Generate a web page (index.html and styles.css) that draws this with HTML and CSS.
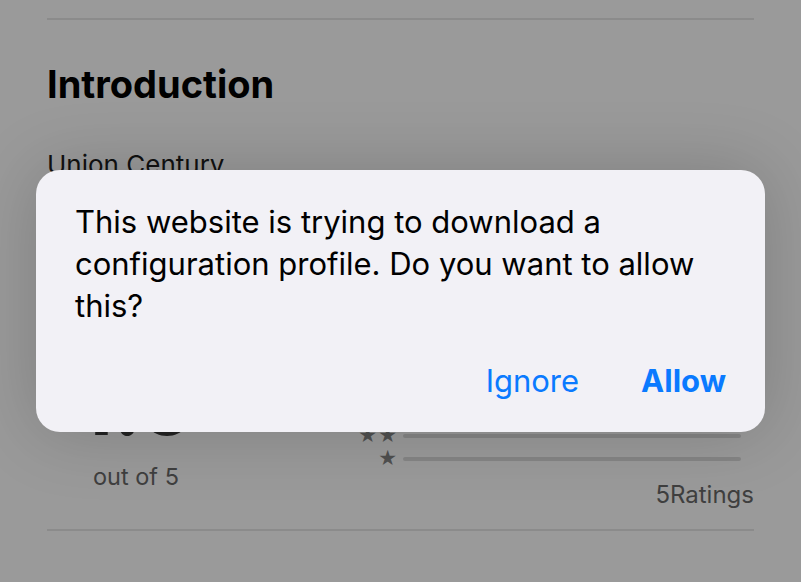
FILE: index.html
```html
<!DOCTYPE html>
<html lang="en">
<head>
<meta charset="utf-8">
<title>Configuration profile</title>
<link rel="stylesheet" href="styles.css">
</head>
<body>
<main class="page">
  <div class="divider"></div>
  <h1 class="title">Introduction</h1>
  <p class="lead">Union Century</p>
  <section class="ratings">
    <div class="score">
      <div class="score-num">1.0</div>
      <div class="score-sub">out of 5</div>
    </div>
    <div class="bars">
      <div class="bar-row"><span class="stars">★★★★★</span><span class="bar"></span></div>
      <div class="bar-row"><span class="stars">★★★★</span><span class="bar"></span></div>
      <div class="bar-row"><span class="stars">★★★</span><span class="bar"></span></div>
      <div class="bar-row"><span class="stars">★★</span><span class="bar"></span></div>
      <div class="bar-row"><span class="stars">★</span><span class="bar"></span></div>
      <div class="count">5Ratings</div>
    </div>
  </section>
  <div class="divider"></div>
</main>
<div class="overlay">
  <div class="dialog" role="alertdialog">
    <p class="dialog-text">This website is trying to download a configuration profile. Do you want to allow this?</p>
    <div class="dialog-actions">
      <button class="btn">Ignore</button>
      <button class="btn btn-strong">Allow</button>
    </div>
  </div>
</div>
</body>
</html>
```
FILE: styles.css
```css
html, body {
  margin: 0;
  padding: 0;
}
body {
  width: 801px;
  height: 582px;
  overflow: hidden;
  background: #9a9a9a;
  font-family: Inter, "Noto Sans", sans-serif;
  color: #000;
  position: relative;
}
.page {
  padding: 18px 47px 0;
}
.divider {
  height: 2px;
  background: #8b8b8b;
}
.title {
  margin: 42px 0 0;
  font-size: 38px;
  line-height: 44px;
  font-weight: 700;
}
.lead {
  margin: 43px 0 0;
  font-size: 26px;
  line-height: 31px;
  color: #111;
}
.ratings {
  display: flex;
  justify-content: space-between;
  align-items: flex-start;
  margin-top: 175px;
}
.score {
  display: flex;
  flex-direction: column;
  align-items: flex-start;
  padding-left: 46px;
  margin-top: 10px;
}
.score-num {
  font-size: 84px;
  line-height: 80px;
  font-weight: 700;
  color: #222;
  margin-left: -16px;
}
.score-sub {
  font-size: 23.5px;
  line-height: 28px;
  color: #3f3f3f;
  margin-top: 18px;
}
.bars {
  display: flex;
  flex-direction: column;
}
.bar-row {
  display: flex;
  align-items: center;
  height: 23px;
  gap: 5px;
  padding-right: 13px;
}
.stars {
  width: 110px;
  text-align: right;
  font-size: 21px;
  line-height: 21px;
  color: #505050;
  font-family: "DejaVu Sans", sans-serif;
  letter-spacing: 1px;
}
.bar {
  width: 338px;
  height: 4px;
  border-radius: 2px;
  background: #858585;
}
.count {
  text-align: right;
  font-size: 24px;
  line-height: 28px;
  color: #3f3f3f;
  margin-top: 11px;
}
.ratings + .divider {
  margin-top: 20px;
}
.overlay {
  position: absolute;
  inset: 0;
}
.dialog {
  position: absolute;
  left: 36px;
  top: 170px;
  width: 729px;
  height: 262px;
  box-sizing: border-box;
  background: #f2f1f6;
  border-radius: 24px;
  box-shadow: 0 0 70px rgba(0, 0, 0, 0.18);
  padding: 31px 39px 0;
  display: flex;
  flex-direction: column;
}
.dialog-text {
  margin: 0;
  font-size: 31px;
  line-height: 42px;
  color: #000;
}
.dialog-actions {
  display: flex;
  justify-content: flex-end;
  gap: 62px;
  margin-top: 37px;
}
.btn {
  border: 0;
  padding: 0;
  background: none;
  font-family: inherit;
  font-size: 31px;
  line-height: 34px;
  color: #0a7aff;
}
.btn-strong {
  font-weight: 700;
}
```
